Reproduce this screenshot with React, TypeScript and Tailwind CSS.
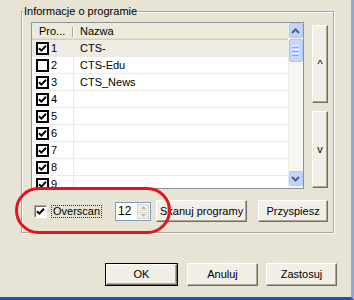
import React from "react";

const Check = () => (
  <svg width="9" height="9" viewBox="0 0 9 9" className="block">
    <polyline points="1,4.2 3.4,6.6 8,1.8" fill="none" stroke="#000" strokeWidth="2" />
  </svg>
);

const ListCheck = ({ on }: { on: boolean }) => (
  <div className="w-[13px] h-[13px] border-2 border-black bg-white flex items-center justify-center shrink-0">
    {on && <Check />}
  </div>
);

const Btn = ({ children, className = "", def = false }: { children: React.ReactNode; className?: string; def?: boolean }) =>
  def ? (
    <div className={`border border-black ${className}`}>
      <div className="w-full h-full flex items-center justify-center bg-[#F1EFE6] border border-t-white border-l-white border-b-[#716F64] border-r-[#716F64] shadow-[inset_-1px_-1px_0_#ACA899]">
        {children}
      </div>
    </div>
  ) : (
    <div className={`flex items-center justify-center bg-[#F1EFE6] border border-t-white border-l-white border-b-[#716F64] border-r-[#716F64] shadow-[inset_-1px_-1px_0_#ACA899] ${className}`}>
      {children}
    </div>
  );

const rows: { n: number; name: string; on: boolean }[] = [
  { n: 1, name: "CTS-", on: true },
  { n: 2, name: "CTS-Edu", on: false },
  { n: 3, name: "CTS_News", on: true },
  { n: 4, name: "", on: true },
  { n: 5, name: "", on: true },
  { n: 6, name: "", on: true },
  { n: 7, name: "", on: true },
  { n: 8, name: "", on: true },
  { n: 9, name: "", on: true },
];

const Chevron = ({ up }: { up: boolean }) => (
  <svg width="9" height="6" viewBox="0 0 9 6" className="block">
    <polyline
      points={up ? "1,5 4.5,1.5 8,5" : "1,1 4.5,4.5 8,1"}
      fill="none"
      stroke="#4D6185"
      strokeWidth="2"
    />
  </svg>
);

export default function App() {
  return (
    <div className="relative w-[354px] h-[300px] overflow-hidden bg-[#E7E4D5] font-['Liberation_Sans',Arial,sans-serif] text-[11px] leading-none text-black border-r-[3px] border-r-[#9AA6C9] border-b-[3px] border-b-[#1E4FCB]">
      <div className="flex flex-col pt-[11px] pl-[21px]">
        {/* Group box */}
        <div className="relative w-[313px] h-[222px] border border-[#ACA899] shadow-[inset_1px_1px_0_#fff,1px_1px_0_#fff] pl-[9px] pt-[10px]">
          <span className="absolute left-[1px] top-[-7px] px-[1px] bg-[#E7E4D5] text-[11px] leading-[13px]">
            Informacje o programie
          </span>
          <div className="flex">
            {/* List */}
            <div className="w-[273px] h-[167px] border border-[#8E9196] bg-white flex overflow-hidden">
              <div className="flex-1 flex flex-col">
                <div className="h-[17px] shrink-0 flex bg-[#EBEADB] border-b border-b-[#D0CDBC] shadow-[inset_0_-1px_0_#E2DFCF]">
                  <div className="w-[42px] h-full flex items-center pl-[7px] relative">
                    Pro...
                    <div className="absolute right-0 top-[4px] h-[10px] w-[2px] border-l border-l-[#ACA899] border-r border-r-white" />
                  </div>
                  <div className="flex-1 flex items-center pl-[6px]">Nazwa</div>
                </div>
                {rows.map((r) => (
                  <div
                    key={r.n}
                    className={`h-[17px] shrink-0 flex border-b border-b-[#EDEBE3] ${r.n === 1 ? "bg-[#EEECE2]" : "bg-white"}`}
                  >
                    <div className="w-[42px] h-full flex items-center pl-[4px] gap-[2px] border-r border-r-[#EDEBE3]">
                      <ListCheck on={r.on} />
                      <span>{r.n}</span>
                    </div>
                    <div className="flex-1 flex items-center pl-[6px]">{r.name}</div>
                  </div>
                ))}
              </div>
              {/* Scrollbar */}
              <div className="w-[15px] h-full flex flex-col bg-[#F6F5F0] shadow-[inset_1px_0_0_#EEEDE5]">
                <div className="h-[15px] mx-[0.5px] shrink-0 rounded-[2px] bg-[#C2D3FC] border border-[#B5C8F2] flex items-center justify-center">
                  <Chevron up />
                </div>
                <div className="h-[23px] mt-[1px] mx-[0.5px] shrink-0 rounded-[2px] bg-[#C6D6FC] border border-[#B0C4F0] flex flex-col items-center justify-center gap-[1px]">
                  <div className="w-[7px] h-[1px] bg-[#EEF4FE]" />
                  <div className="w-[7px] h-[1px] bg-[#8CA8E8]" />
                  <div className="w-[7px] h-[1px] bg-[#EEF4FE]" />
                  <div className="w-[7px] h-[1px] bg-[#8CA8E8]" />
                  <div className="w-[7px] h-[1px] bg-[#EEF4FE]" />
                  <div className="w-[7px] h-[1px] bg-[#8CA8E8]" />
                </div>
                <div className="flex-1" />
                <div className="h-[15px] mx-[0.5px] mb-[2px] shrink-0 rounded-[2px] bg-[#C2D3FC] border border-[#B5C8F2] flex items-center justify-center">
                  <Chevron up={false} />
                </div>
              </div>
            </div>
            {/* Right buttons */}
            <div className="ml-[8px] mt-[3px] flex flex-col gap-[8px]">
              <Btn className="w-[16px] h-[78px] text-[11px]">^</Btn>
              <Btn className="w-[16px] h-[77px] text-[11px]">v</Btn>
            </div>
          </div>
          {/* Bottom controls */}
          <div className="flex items-center h-[22px] mt-[11px]">
            <div className="ml-[3px] w-[13px] h-[13px] bg-white border border-t-[#ACA899] border-l-[#ACA899] border-b-white border-r-white shadow-[inset_1px_1px_0_#716F64] flex items-center justify-center">
              <Check />
            </div>
            <div className="ml-[4px] h-[13px] px-[1px] flex items-center border border-dotted border-[#333]">Overscan</div>
            <div className="ml-[13px] w-[36px] h-[19px] bg-white border border-[#7F9DB9] flex">
              <div className="flex-1 flex items-center pl-[2px] text-[12px]">12</div>
              <div className="w-[14px] flex flex-col gap-[1px] p-[1px]">
                <div className="flex-1 bg-[#F1EFE6] border border-[#D8D6CB] flex items-center justify-center">
                  <svg width="5" height="3" viewBox="0 0 5 3"><polygon points="0,3 2.5,0 5,3" fill="#B8B6AC" /></svg>
                </div>
                <div className="flex-1 bg-[#F1EFE6] border border-[#D8D6CB] flex items-center justify-center">
                  <svg width="5" height="3" viewBox="0 0 5 3"><polygon points="0,0 2.5,3 5,0" fill="#B8B6AC" /></svg>
                </div>
              </div>
            </div>
            <Btn className="ml-[5px] w-[91px] h-[22px]">Skanuj programy</Btn>
            <Btn className="ml-[11px] w-[70px] h-[22px]">Przyspiesz</Btn>
          </div>
        </div>
        {/* Bottom buttons */}
        <div className="flex mt-[30px] pl-[84px]">
          <Btn def className="w-[73px] h-[23px]">OK</Btn>
          <Btn className="ml-[9px] w-[71px] h-[23px]">Anuluj</Btn>
          <Btn className="ml-[8px] w-[71px] h-[23px]">Zastosuj</Btn>
        </div>
      </div>
      {/* Red annotation ellipse */}
      <div className="absolute left-[15px] top-[187px] w-[156px] h-[47px] rounded-full border-[3px] border-[#E4141B] pointer-events-none" />
    </div>
  );
}
